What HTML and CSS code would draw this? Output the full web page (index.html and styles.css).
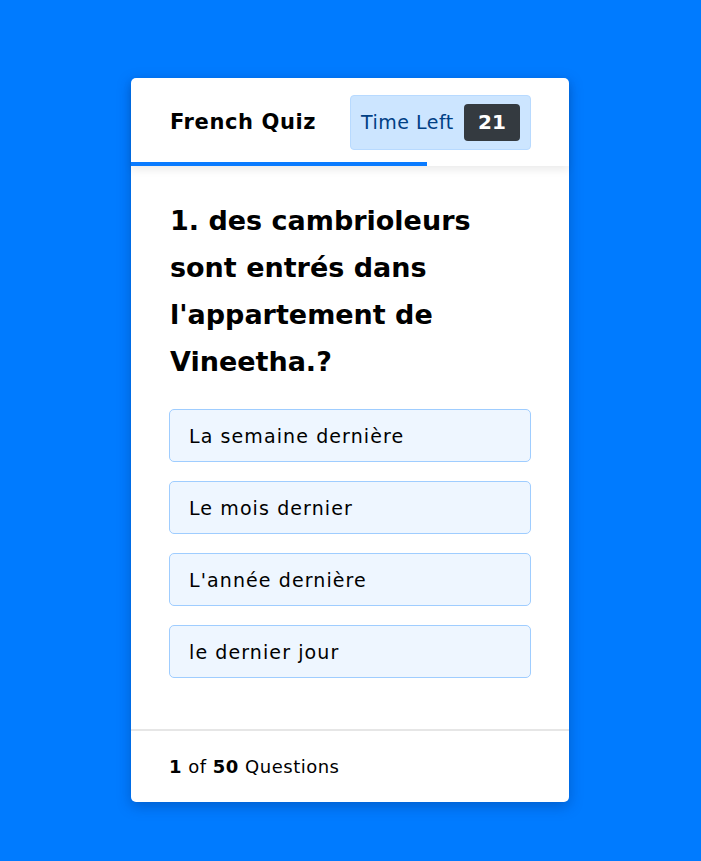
FILE: index.html
```html
<!DOCTYPE html>
<html lang="fr">
<head>
<meta charset="utf-8">
<title>French Quiz</title>
<link rel="stylesheet" href="styles.css">
</head>
<body>
<div class="card">
  <header class="card-header">
    <h1 class="title">French Quiz</h1>
    <div class="timer">
      <span class="timer-label">Time Left</span>
      <span class="timer-badge">21</span>
    </div>
    <div class="progress" style="width: 67.6%"></div>
  </header>
  <main class="card-body">
    <h2 class="question">1. des cambrioleurs sont entrés dans l'appartement de Vineetha.?</h2>
    <ul class="options">
      <li class="option">La semaine dernière</li>
      <li class="option">Le mois dernier</li>
      <li class="option">L'année dernière</li>
      <li class="option">le dernier jour</li>
    </ul>
  </main>
  <footer class="card-footer">
    <span><b>1</b> of <b>50</b> Questions</span>
  </footer>
</div>
</body>
</html>
```
FILE: styles.css
```css
* { box-sizing: border-box; }
html, body { margin: 0; padding: 0; }
body {
  background: #007bff;
  font-family: "DejaVu Sans", "Noto Sans", sans-serif;
  color: #000;
  padding: 78px 1px 0 0;
  min-height: 861px;
}
.card {
  width: 438px;
  margin: 0 auto;
  background: #fff;
  border-radius: 5px;
  box-shadow: 0 4px 14px rgba(0, 40, 110, 0.35);
}
.card-header {
  position: relative;
  height: 88px;
  padding: 0 38px;
  display: flex;
  align-items: center;
  justify-content: space-between;
  box-shadow: 0 4px 8px rgba(0, 0, 0, 0.08);
}
.title {
  margin: 0 0 0 1px;
  font-size: 21px;
  font-weight: 700;
  letter-spacing: 0.6px;
}
.timer {
  display: flex;
  align-items: center;
  width: 181px;
  height: 55px;
  padding: 0 10px 0 10px;
  background: #cce5ff;
  border: 1px solid #b8daff;
  border-radius: 4px;
  justify-content: space-between;
}
.timer-label {
  color: #004085;
  font-size: 19px;
  letter-spacing: 0.5px;
}
.timer-badge {
  width: 56px;
  height: 37px;
  background: #343a40;
  color: #fff;
  border-radius: 4px;
  display: flex;
  align-items: center;
  justify-content: center;
  font-size: 20px;
  font-weight: 600;
}
.progress {
  position: absolute;
  left: 0;
  bottom: 0;
  height: 4px;
  background: #0a7bff;
}
.card-body {
  padding: 31px 38px 51px;
}
.question {
  margin: 0 0 24px 1px;
  font-size: 27px;
  font-weight: 700;
  line-height: 47px;
}
.options {
  list-style: none;
  margin: 0;
  padding: 0;
  display: flex;
  flex-direction: column;
  gap: 19px;
}
.option {
  height: 53px;
  display: flex;
  align-items: center;
  padding: 0 19px;
  background: #eef6ff;
  border: 1px solid #9fcdff;
  border-radius: 5px;
  font-size: 19px;
  letter-spacing: 1.1px;
}
.card-footer {
  height: 73px;
  border-top: 2px solid #e6e6e6;
  padding: 0 38px;
  display: flex;
  align-items: center;
  font-size: 18px;
  letter-spacing: 0.5px;
}
.card-footer b { font-weight: 700; }
```
